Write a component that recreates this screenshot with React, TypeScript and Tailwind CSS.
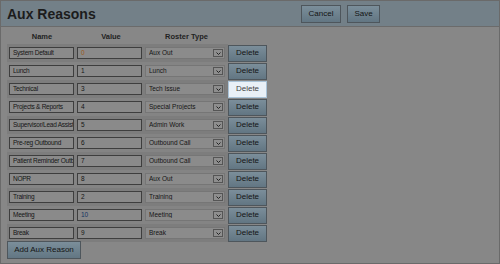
import type { ReactNode } from "react";

type Row = { name: string; value: string; roster: string; valueTone?: "orange" | "blue"; hot?: boolean };

const rows: Row[] = [
  { name: "System Default", value: "0", roster: "Aux Out", valueTone: "orange" },
  { name: "Lunch", value: "1", roster: "Lunch" },
  { name: "Technical", value: "3", roster: "Tech Issue", hot: true },
  { name: "Projects & Reports", value: "4", roster: "Special Projects" },
  { name: "Supervisor/Lead Assist", value: "5", roster: "Admin Work" },
  { name: "Pre-reg Outbound", value: "6", roster: "Outbound Call" },
  { name: "Patient Reminder Outbound", value: "7", roster: "Outbound Call" },
  { name: "NOPR", value: "8", roster: "Aux Out" },
  { name: "Training", value: "2", roster: "Training" },
  { name: "Meeting", value: "10", roster: "Meeting", valueTone: "blue" },
  { name: "Break", value: "9", roster: "Break" },
];

export default function App() {
  return (
    <div className="h-[264px] w-[500px] overflow-hidden border border-[#6a6a6a] bg-[#878787] font-['Liberation_Sans',Arial,sans-serif] text-[#151515]">
      <header className="flex h-[26px] items-center border-b border-[#6b6b6b] bg-[#738088] pl-[6px]">
        <h1 className="text-[14px] font-bold leading-none text-[#1c1c1c]">Aux Reasons</h1>
        <div className="ml-auto mr-[119px] flex gap-[6px]">
          <BlueButton className="h-[18px] w-[40px] text-[8px]">Cancel</BlueButton>
          <BlueButton className="h-[18px] w-[33px] text-[8px]">Save</BlueButton>
        </div>
      </header>

      <div className="flex flex-col items-start pl-[6px] pt-[4px]">
        <div className="flex h-[12px] items-center text-[7.5px] font-bold text-[#222]">
          <span className="w-[70px] text-center">Name</span>
          <span className="w-[68px] text-center">Value</span>
          <span className="w-[83px] text-center">Roster Type</span>
        </div>
        <div className="mt-[1px] flex flex-col">
          {rows.map((r, i) => (
            <div key={r.name} className="flex h-[18px] items-center">
              <div className={`flex h-full w-[221px] shrink-0 items-center gap-[3px] pl-[2px] ${i % 2 === 0 ? "bg-[#7d7d7d]" : "bg-[#848484]"}`}>
                <Field className="w-[65px] tracking-[-0.25px]">{r.name}</Field>
                <Field className={`w-[65px] ${r.valueTone === "orange" ? "text-[#9a5818]" : r.valueTone === "blue" ? "text-[#123462]" : ""}`}>{r.value}</Field>
                <div className="flex h-[12px] w-[80px] shrink-0 items-center border border-[#767676] bg-[#8b8b8b] pl-[3px] pr-[1px]">
                  <span className="min-w-0 flex-1 overflow-hidden whitespace-nowrap text-[6.5px] leading-none">{r.roster}</span>
                  <span className="flex h-[8px] w-[10px] shrink-0 items-center justify-center border border-[#555] bg-[#8e8e8e]">
                    <svg width="5" height="3" viewBox="0 0 5 3"><path d="M0.5 0.5 L2.5 2.5 L4.5 0.5" fill="none" stroke="#222" strokeWidth="1" /></svg>
                  </span>
                </div>
              </div>
              {r.hot ? (
                <button className="h-[17px] w-[39px] shrink-0 border border-[#a9c3d8] bg-[#e9f0f7] text-[8px] leading-none text-[#444]">Delete</button>
              ) : (
                <BlueButton className="h-[17px] w-[39px] shrink-0 text-[8px]">Delete</BlueButton>
              )}
            </div>
          ))}
        </div>
        <BlueButton className="mt-[-1px] block h-[18px] w-[74px] whitespace-nowrap text-[8px]">Add Aux Reason</BlueButton>
      </div>
    </div>
  );
}

function Field({ children, className = "" }: { children: ReactNode; className?: string }) {
  return (
    <div className={`h-[12px] shrink-0 overflow-hidden whitespace-nowrap border border-[#3e3e3e] bg-[#8a8a8a] pl-[3px] text-[6.5px] leading-[10px] ${className}`}>
      {children}
    </div>
  );
}

function BlueButton({ children, className = "" }: { children: ReactNode; className?: string }) {
  return (
    <button className={`border border-[#4e565c] bg-gradient-to-b from-[#7b8e9a] to-[#627683] leading-none text-[#141414] ${className}`}>
      {children}
    </button>
  );
}
